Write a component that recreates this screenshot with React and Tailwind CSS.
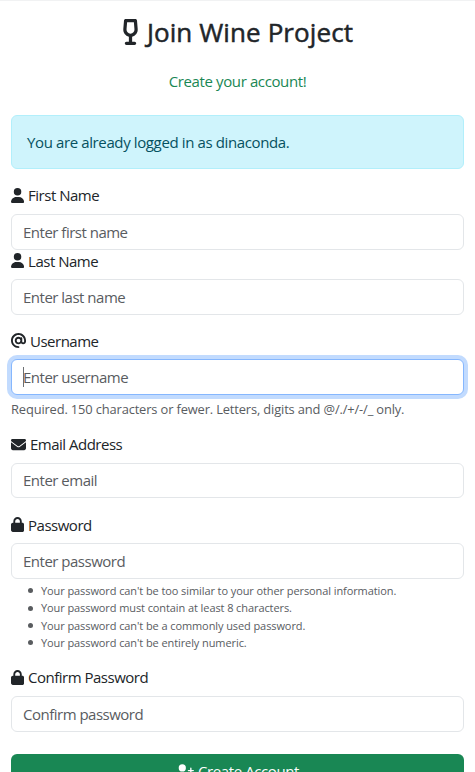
import {
  FaAt,
  FaEnvelope,
  FaLock,
  FaUser,
  FaUserPlus,
  FaWineGlassEmpty,
} from "react-icons/fa6";

const hints = [
  "Your password can't be too similar to your other personal information.",
  "Your password must contain at least 8 characters.",
  "Your password can't be a commonly used password.",
  "Your password can't be entirely numeric.",
];

function Field({ icon, label, placeholder, type = "text", focused = false, className = "" }) {
  return (
    <div className={className}>
      <label className="flex h-[22px] items-center gap-[4px] pb-[1px] tracking-[-0.5px] text-[#212529]">
        {icon}
        <span className="pb-[0.4px]">{label}</span>
      </label>
      <div className="relative mt-[7px]">
        <input
          type={type}
          placeholder={placeholder}
          className={
            "block h-[35.5px] w-full rounded-[6px] border bg-white px-[11px] pb-[0.5px] tracking-[-0.5px] outline-none placeholder:text-[#595c5f] placeholder:opacity-100 " +
            (focused ? "border-[#86b7fe] shadow-[0_0_0_4px_#c2dbfe]" : "border-[#e3e6e9]")
          }
        />
        {focused && <span className="absolute left-[12px] top-[8px] h-[20px] w-px bg-[#6c6f72]" />}
      </div>
    </div>
  );
}

export default function App() {
  return (
    <div className="h-[772px] overflow-hidden border-t border-[#f1f2f3] bg-white pl-[11px] pr-[11px] font-['Open_Sans','Noto_Sans',sans-serif] text-[15px] leading-[22px] tracking-[-0.46px] text-[#212529]">
      <h1 className="mt-[13px] flex h-[36px] items-center justify-center gap-[8px] text-[26px] font-medium tracking-[0.1px] [-webkit-text-stroke:0.5px_#212529]">
        <FaWineGlassEmpty className="h-[26px] w-[17px]" />
        <span>Join Wine Project</span>
      </h1>
      <p className="mt-[20px] text-center tracking-[-0.38px] text-[#198754]">Create your account!</p>
      <div className="mt-[23px] flex h-[54px] items-center rounded-[6px] border border-[#b2effb] bg-[#cff4fc] px-[15px] pb-px tracking-[-0.38px] text-[#055160]">
        You are already logged in as dinaconda.
      </div>

      <form>
        <Field className="mt-[16px]" icon={<FaUser className="h-[15px] w-[13.1px]" />} label="First Name" placeholder="Enter first name" />
        <Field className="mt-[0.9px]" icon={<FaUser className="h-[15px] w-[13.1px]" />} label="Last Name" placeholder="Enter last name" />
        <Field className="mt-[15.4px]" icon={<FaAt className="size-[15px]" />} label="Username" placeholder="Enter username" focused />
        <p className="mt-[4.2px] h-[20px] text-[12.9px] leading-[20px] tracking-[-0.15px] text-[#595c5f]">
          Required. 150 characters or fewer. Letters, digits and @/./+/-/_ only.
        </p>
        <Field className="mt-[15px]" icon={<FaEnvelope className="size-[15px]" />} label="Email Address" placeholder="Enter email" />
        <Field className="mt-[15.8px]" icon={<FaLock className="h-[15px] w-[13.1px]" />} label="Password" placeholder="Enter password" type="password" />
        <ul className="mt-[3.2px] pl-[17px] text-[11px] leading-[17.4px] tracking-[-0.09px] text-[#595c5f]">
          {hints.map((hint) => (
            <li key={hint} className="flex items-center gap-[8px]">
              <span className="size-[5px] rounded-full bg-[#595c5f]" />
              <span>{hint}</span>
            </li>
          ))}
        </ul>
        <Field className="mt-[15.6px]" icon={<FaLock className="h-[15px] w-[13.1px]" />} label="Confirm Password" placeholder="Confirm password" type="password" />
        <button type="button" className="mt-[22px] flex h-[36px] w-full items-center justify-center gap-[4px] rounded-[6px] bg-[#198754] pb-px tracking-[-0.4px] text-white">
          <FaUserPlus className="h-[15px] w-[18px]" />
          <span>Create Account</span>
        </button>
      </form>
    </div>
  );
}
